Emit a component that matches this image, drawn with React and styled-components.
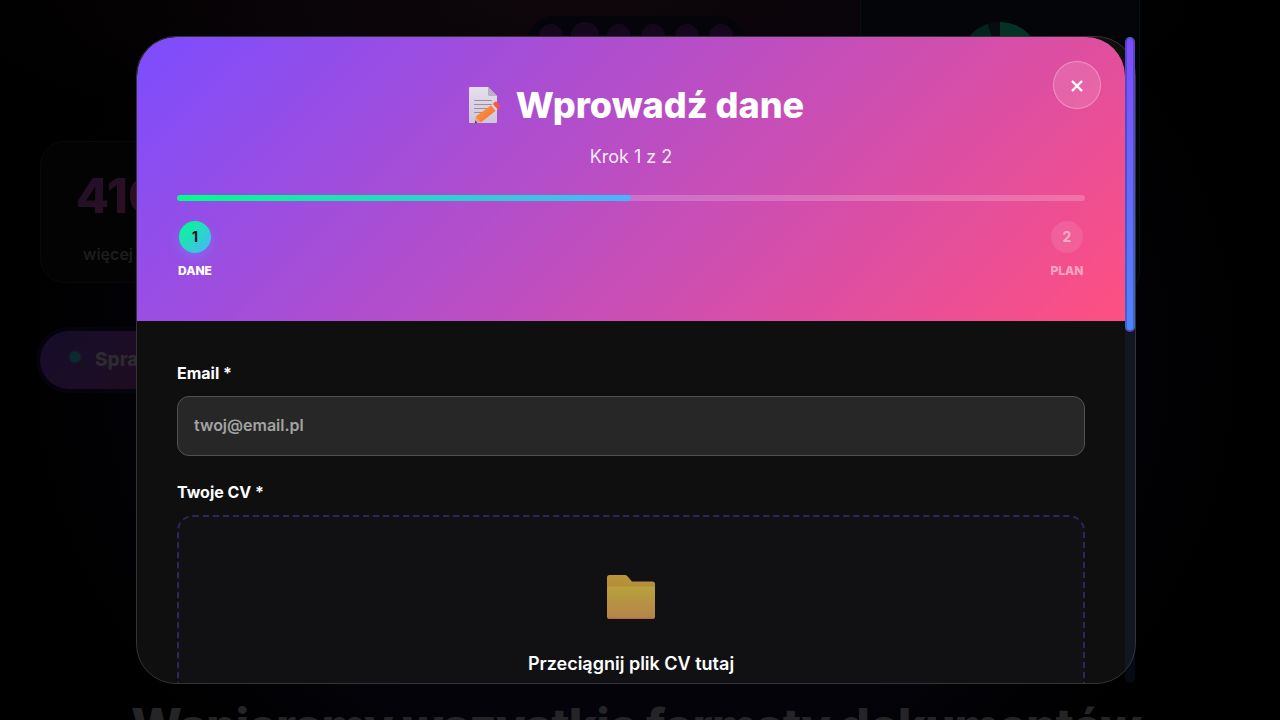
import React from "react";
import styled, { createGlobalStyle, css } from "styled-components";

const Global = createGlobalStyle`
  *, *::before, *::after { box-sizing: border-box; }
  html, body { height: 100%; }
  body {
    margin: 0;
    padding-right: 8px;
    overflow: hidden;
    background: #000;
    font-family: Inter, "Liberation Sans", sans-serif;
    color: #fff;
  }
  #root { height: 100%; }
  h2, p { margin: 0; }
  button, input { font: inherit; }
`;

const Screen = styled.div`
  display: grid;
  height: 100%;
  overflow: hidden;
  > * { grid-area: 1 / 1; min-width: 0; min-height: 0; }
`;

/* ---------- dimmed landing page ---------- */

const Page = styled.div`
  display: flex;
  flex-direction: column;
  overflow: hidden;
  background:
    radial-gradient(ellipse 50% 22% at 45% 0%, #0e060a 0%, transparent 100%),
    radial-gradient(ellipse 48% 75% at 50% 50%, #04030b 0%, #04030a 70%, #000 100%);
`;

const Hero = styled.div`
  display: grid;
  grid-template-columns: 1fr 280px;
  flex: 0 0 auto;
  height: 680px;
  padding: 0 132px 0 40px;
`;

const HeroCopy = styled.div`
  display: flex;
  flex-direction: column;
  align-items: flex-start;
  gap: 48px;
  padding-top: 16px;
`;

const Dots = styled.div`
  display: flex;
  align-items: center;
  align-self: flex-end;
  gap: 10px;
  height: 77px;
  margin-right: 114px;
  padding: 0 13px;
  border-radius: 28px;
  background: #05040a;
`;

const Dot = styled.span`
  width: 24px;
  height: 61px;
  border: 1px solid #150a1c;
  border-radius: 12px;
  background: radial-gradient(circle at 50% 30%, #180820, #0d0514);
  box-shadow: 0 0 0 ${(p) => (p.$active ? 2 : 0)}px #150a1c;
`;

const Stat = styled.div`
  display: flex;
  flex-direction: column;
  gap: 16px;
  width: 240px;
  height: 142px;
  padding: 24px 35px;
  border: 1px solid #09090b;
  border-radius: 24px;
  background: #030304;
`;

const StatValue = styled.strong`
  background: linear-gradient(135deg, #1f0f2c, #33101b 60%);
  background-clip: text;
  -webkit-background-clip: text;
  color: transparent;
  font-size: 48px;
  font-weight: 800;
  line-height: 60px;
`;

const StatLabel = styled.span`
  padding-left: 7px;
  color: #1d1d1f;
  font-size: 16px;
  font-weight: 600;
  line-height: 24px;
`;

const Cta = styled.button`
  display: flex;
  align-items: center;
  gap: 8px;
  width: 300px;
  height: 58px;
  padding: 0 27px 2px;
  border: 0;
  border-radius: 29px;
  background: linear-gradient(135deg, #150d2c, #230d1c 60%);
  box-shadow: 0 0 0 4px #05040d;
  color: #2c2b2e;
  font-size: 19px;
  font-weight: 800;
`;

const ResultPanel = styled.div`
  display: flex;
  justify-content: center;
  height: 295px;
  padding-top: 22px;
  border: 1px solid #04120f;
  border-top: 0;
  border-radius: 0 0 24px 24px;
  background: #030509;
`;

const Ring = styled.span`
  width: 80px;
  height: 80px;
  border-radius: 50%;
  background: conic-gradient(#043326 0 80%, #03241d 80% 95%, #060d10 95%);
`;

const Formats = styled.h2`
  color: #252527;
  font-size: 48px;
  font-weight: 800;
  letter-spacing: -1px;
  line-height: 92px;
  text-align: center;
  white-space: nowrap;
`;

/* ---------- dialog ---------- */

const Overlay = styled.div`
  z-index: 1;
  display: flex;
  align-items: center;
  justify-content: center;
`;

const Dialog = styled.div`
  position: relative;
  display: flex;
  width: 100%;
  max-width: 1000px;
  height: 90vh;
  border: 1px solid #343434;
  border-radius: 40px;
  background: #0f0f0f;
`;

const Scroller = styled.div`
  flex: 1;
  min-width: 0;
  overflow: hidden;
  border-radius: 39px 0 0 39px;
`;

const ScrollTrack = styled.div`
  flex: 0 0 10px;
  border-radius: 5px;
  background: rgba(30, 60, 120, 0.16);
`;

const ScrollThumb = styled.div`
  height: 295px;
  border: 2px solid rgba(20, 24, 36, 0.28);
  border-radius: 5px;
  background: linear-gradient(180deg, #7c4dff, #4d84ff);
`;

const Header = styled.header`
  display: flex;
  flex-direction: column;
  padding: 40px;
  border-radius: 39px 39px 0 0;
  background: linear-gradient(135deg, #7c4dff 0%, #ff4f81 100%);
`;

const Title = styled.h2`
  display: flex;
  align-items: center;
  justify-content: center;
  gap: 10px;
  font-size: 36px;
  font-weight: 800;
  line-height: 56px;
`;

const Subtitle = styled.p`
  margin: 9px 0 24px;
  color: rgba(255, 255, 255, 0.9);
  font-size: 18px;
  line-height: 29px;
  text-align: center;
`;

const Close = styled.button`
  position: absolute;
  top: 24px;
  right: 34px;
  display: flex;
  align-items: center;
  justify-content: center;
  width: 48px;
  height: 48px;
  padding: 0;
  border: 1px solid rgba(255, 255, 255, 0.3);
  border-radius: 50%;
  background: rgba(255, 255, 255, 0.13);
  color: #fff;
`;

const Progress = styled.div`
  height: 6px;
  overflow: hidden;
  border-radius: 3px;
  background: rgba(255, 255, 255, 0.2);
`;

const ProgressFill = styled.div`
  height: 100%;
  border-radius: 3px;
  background: linear-gradient(90deg, #00ff88, #4db2ff);
`;

const Steps = styled.div`
  display: flex;
  justify-content: space-between;
  margin-top: 20px;
`;

const Step = styled.div`
  display: flex;
  flex-direction: column;
  align-items: center;
  gap: 8px;
  min-width: 36px;
  color: ${(p) => (p.$active ? "#fff" : "rgba(255, 255, 255, 0.5)")};
  font-size: 12px;
  font-weight: 800;
  line-height: 20px;
`;

const StepNumber = styled.span`
  display: flex;
  align-items: center;
  justify-content: center;
  width: 32px;
  height: 32px;
  border-radius: 50%;
  background: rgba(255, 255, 255, 0.1);
  font-size: 14px;
  font-weight: 700;
  ${(p) =>
    p.$active &&
    css`
      background: linear-gradient(135deg, #00ff88, #4db2ff);
      box-shadow: 0 4px 12px rgba(77, 178, 255, 0.3);
      color: #0f0f0f;
    `}
`;

const Form = styled.form`
  display: flex;
  flex-direction: column;
  gap: 24px;
  padding: 40px;
`;

const Field = styled.div`
  display: flex;
  flex-direction: column;
  gap: 10px;
`;

const Label = styled.label`
  font-size: 16px;
  font-weight: 700;
  line-height: 25px;
`;

const TextInput = styled.input`
  width: 100%;
  height: 60px;
  padding: 0 16px 2px;
  border: 1px solid #525252;
  border-radius: 12px;
  background: #272727;
  color: #fff;
  font-size: 16px;
  font-weight: 600;
  &::placeholder { color: #a3a3a3; opacity: 1; }
`;

const DropZone = styled.label`
  display: flex;
  flex-direction: column;
  align-items: center;
  gap: 30px;
  height: 300px;
  padding-top: 56px;
  border: 2px dashed #30265c;
  border-radius: 16px;
  background: #111113;
  font-size: 18px;
  font-weight: 600;
  line-height: 25px;
`;

const FileInput = styled.input`
  display: none;
`;

const MemoIcon = () => (
  <svg width="48" height="40" viewBox="-8 0 48 40" aria-hidden="true">
    <defs>
      <linearGradient id="paper" x1="0" y1="0" x2="0" y2="1">
        <stop offset="0" stopColor="#e6dfee" />
        <stop offset="1" stopColor="#cfc6d8" />
      </linearGradient>
      <linearGradient id="pen" x1="0" y1="0" x2="1" y2="1">
        <stop offset="0" stopColor="#ff9a3d" />
        <stop offset="1" stopColor="#f56a3a" />
      </linearGradient>
    </defs>
    <path d="M4 2h18l9 9v26a1 1 0 0 1-1 1H4a1 1 0 0 1-1-1V3a1 1 0 0 1 1-1z" fill="url(#paper)" />
    <path d="M22 2l9 9h-7.500a1.500 1.500 0 0 1-1.500-1.500z" fill="#b9b0c3" />
    <path d="M8.500 15.500h17M8.500 19.500h17M8.500 23.500h13M8.500 27.500h8" stroke="#96909f" strokeWidth="1.200" strokeLinecap="round" />
    <path d="M9.800 31.500l5 5.500-5.800 1z" fill="#e0a878" />
    <path d="M9.300 35.500l2 2.300-2.500.2z" fill="#4a3340" />
    <path d="M9.800 31.500L25.500 20l4.500 5.500L14.800 37.500z" fill="url(#pen)" />
    <path d="M25 20.300l2-1.500 4.500 5.500-2 1.500z" fill="#dcd3e3" />
    <path d="M27 18.900l1.700-1.900c.8-.9 1.800-.8 2.600.2l2.200 2.800c.8 1 .7 2-.2 2.700l-1.900 1.600z" fill="#f55a3c" />
  </svg>
);

const FolderIcon = () => (
  <svg width="48" height="48" viewBox="0 0 48 48" aria-hidden="true">
    <defs>
      <linearGradient id="front" x1="0" y1="0" x2="0" y2="1">
        <stop offset="0" stopColor="#b8a23d" />
        <stop offset="1" stopColor="#b5834a" />
      </linearGradient>
      <linearGradient id="back" x1="0" y1="0" x2="0" y2="1">
        <stop offset="0" stopColor="#b8953d" />
        <stop offset="1" stopColor="#b5812f" />
      </linearGradient>
    </defs>
    <path d="M0 4.500a2.500 2.500 0 0 1 2.500-2.500h15c1.300 0 2.200.3 3 1.200L25 8.500h20.500A2.500 2.500 0 0 1 48 11V30H0z" fill="url(#back)" />
    <path d="M0 15.500a2 2 0 0 1 2-2h44a2 2 0 0 1 2 2v28a2.500 2.500 0 0 1-2.500 2.500h-43A2.500 2.500 0 0 1 0 43.500z" fill="url(#front)" />
    <path d="M.6 44.800c.5.8 1.200 1.200 2 1.200h42.900c.8 0 1.500-.4 2-1.200z" fill="#b56a55" />
  </svg>
);

const MagnifierIcon = () => (
  <svg width="20" height="20" viewBox="0 0 20 20" aria-hidden="true">
    <path d="M12.500 12.500l5 4" stroke="#1a1216" strokeWidth="3" strokeLinecap="round" />
    <circle cx="8" cy="8" r="6" fill="#0b2a2f" stroke="#141b22" strokeWidth="1" />
  </svg>
);

const CloseIcon = () => (
  <svg width="14" height="14" viewBox="0 0 14 14" aria-hidden="true">
    <path d="M2 3l10 10M12 3L2 13" stroke="currentColor" strokeWidth="2.400" />
  </svg>
);

export default function App() {
  return (
    <>
      <Global />
      <Screen>
        <Page aria-hidden="true">
          <Hero>
            <HeroCopy>
              <Dots>
                {[0, 1, 2, 3, 4, 5].map((i) => (
                  <Dot key={i} $active={i === 1} />
                ))}
              </Dots>
              <Stat>
                <StatValue>410%</StatValue>
                <StatLabel>więcej</StatLabel>
              </Stat>
              <Cta type="button" tabIndex={-1}>
                <MagnifierIcon />
                Sprawdź
              </Cta>
            </HeroCopy>
            <ResultPanel>
              <Ring />
            </ResultPanel>
          </Hero>
          <Formats>Wspieramy wszystkie formaty dokumentów</Formats>
        </Page>
        <Overlay>
          <Dialog role="dialog" aria-modal="true" aria-labelledby="dialog-title">
            <Scroller>
              <Header>
                <Title id="dialog-title">
                  <MemoIcon />
                  Wprowadź dane
                </Title>
                <Subtitle>Krok 1 z 2</Subtitle>
                <Progress>
                  <ProgressFill style={{ width: "50%" }} />
                </Progress>
                <Steps>
                  <Step $active>
                    <StepNumber $active>1</StepNumber>
                    DANE
                  </Step>
                  <Step>
                    <StepNumber>2</StepNumber>
                    PLAN
                  </Step>
                </Steps>
              </Header>
              <Form>
                <Field>
                  <Label htmlFor="email">Email *</Label>
                  <TextInput id="email" type="email" placeholder="twoj@email.pl" />
                </Field>
                <Field>
                  <Label htmlFor="cv">Twoje CV *</Label>
                  <DropZone htmlFor="cv">
                    <FolderIcon />
                    Przeciągnij plik CV tutaj
                  </DropZone>
                  <FileInput id="cv" type="file" />
                </Field>
              </Form>
            </Scroller>
            <ScrollTrack>
              <ScrollThumb />
            </ScrollTrack>
            <Close type="button" aria-label="Zamknij">
              <CloseIcon />
            </Close>
          </Dialog>
        </Overlay>
      </Screen>
    </>
  );
}
